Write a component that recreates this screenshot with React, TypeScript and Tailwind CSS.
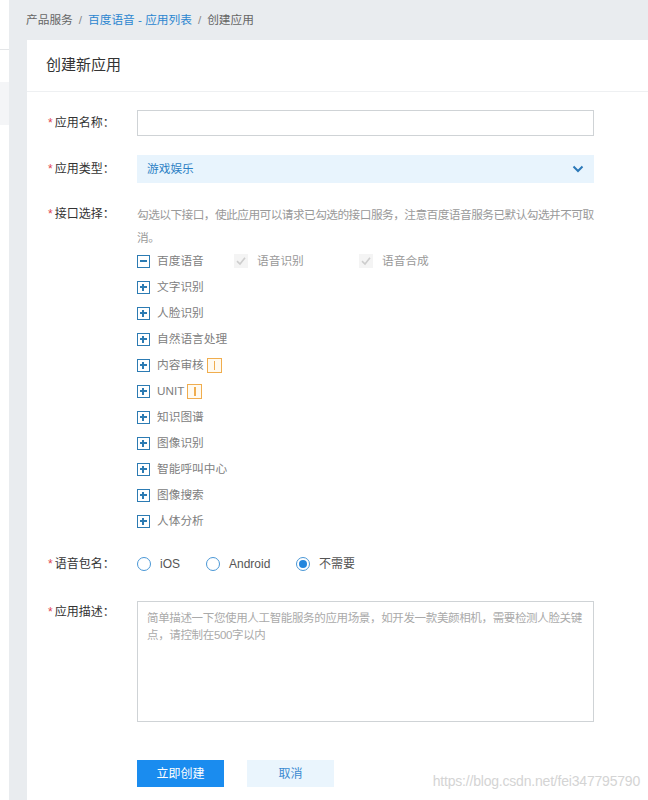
import React from "react";

const font = { fontFamily: '"Liberation Sans", "Noto Sans CJK SC", sans-serif' };

function Label({ text }: { text: string }) {
  return (
    <div className="w-[89px] shrink-0 text-[12px] text-[#333]">
      <span className="text-[#e0454f] mr-[2px]">*</span>
      {text}
    </div>
  );
}

function TreeBox({ minus }: { minus?: boolean }) {
  return (
    <span className="relative inline-block w-[13px] h-[13px] border-[1.5px] border-[#2c7bb3] shrink-0">
      <span className="absolute left-[2px] right-[2px] top-[4px] h-[2px] bg-[#2c7bb3]" />
      {!minus && <span className="absolute top-[2px] bottom-[2px] left-[4px] w-[2px] bg-[#2c7bb3]" />}
    </span>
  );
}

function Badge() {
  return (
    <span className="ml-[3px] inline-flex items-center justify-center w-[15px] h-[15px] border border-[#f0ad4e] bg-[#fffaf0]">
      <span className="w-[1.5px] h-[9px] bg-[#f0ad4e]" />
    </span>
  );
}

function DisabledCheck({ label }: { label: string }) {
  return (
    <span className="flex items-center">
      <svg width="14" height="14" viewBox="0 0 14 14" className="mr-[9px]">
        <rect x="0" y="0" width="14" height="14" fill="#f4f4f4" />
        <path d="M3 7.2 L6 10 L11 3.8" stroke="#cdcdcd" strokeWidth="1.6" fill="none" />
      </svg>
      <span className="text-[#999]">{label}</span>
    </span>
  );
}

function Radio({ label, checked }: { label: string; checked?: boolean }) {
  return (
    <span className="flex items-center">
      <span className="w-[14px] h-[14px] rounded-full border border-[#4a97d6] flex items-center justify-center mr-[9px]">
        {checked && <span className="w-[8px] h-[8px] rounded-full bg-[#2486dd]" />}
      </span>
      <span className="text-[#555]">{label}</span>
    </span>
  );
}

const items: { name: string; badge?: boolean }[] = [
  { name: "文字识别" },
  { name: "人脸识别" },
  { name: "自然语言处理" },
  { name: "内容审核", badge: true },
  { name: "UNIT", badge: true },
  { name: "知识图谱" },
  { name: "图像识别" },
  { name: "智能呼叫中心" },
  { name: "图像搜索" },
  { name: "人体分析" },
];

export default function App() {
  return (
    <div className="relative w-[648px] h-[800px] overflow-hidden flex bg-[#e9ecef]" style={font}>
      {/* left sidebar sliver */}
      <div className="w-[9px] shrink-0 bg-white flex flex-col">
        <div className="h-[49px]" />
        <div className="h-px bg-[#e4e6e8]" />
        <div className="h-[32px]" />
        <div className="h-[43px] bg-[#f4f5f7]" />
      </div>
      <div className="flex-1 flex flex-col pl-[18px]">
        {/* breadcrumb */}
        <div className="h-[40px] flex items-center text-[11.7px] text-[#666] -ml-[1px]">
          <span>产品服务</span>
          <span className="mx-[6px] text-[#888]">/</span>
          <span className="text-[#2b86d0]">百度语音 - 应用列表</span>
          <span className="mx-[6px] text-[#888]">/</span>
          <span>创建应用</span>
        </div>
        {/* card */}
        <div className="flex-1 bg-white flex flex-col">
          <div className="h-[52px] flex items-center pl-[19px] text-[15px] text-[#333] border-b border-[#eef0f2]">
            创建新应用
          </div>
          <div className="pl-[21px] pt-[18px] flex flex-col">
            {/* name */}
            <div className="flex items-center h-[26px]">
              <Label text="应用名称：" />
              <div className="w-[457px] h-[26px] border border-[#cfd3d6]" />
            </div>
            {/* type */}
            <div className="flex items-center h-[28px] mt-[19px]">
              <Label text="应用类型：" />
              <div className="w-[457px] h-[28px] bg-[#e8f4fd] flex items-center justify-between pl-[10px] pr-[10px] text-[11.7px] text-[#2b7fc4]">
                <span>游戏娱乐</span>
                <svg width="12" height="8" viewBox="0 0 12 8">
                  <path d="M1.5 1.5 L6 6 L10.5 1.5" stroke="#2b78b8" strokeWidth="2" fill="none" />
                </svg>
              </div>
            </div>
            {/* interfaces */}
            <div className="flex mt-[20px]">
              <div className="leading-[23px]">
                <Label text="接口选择：" />
              </div>
              <div className="w-[470px] text-[11.7px]">
                <div className="leading-[23px] text-[#999] whitespace-nowrap tracking-[-0.55px]">
                  勾选以下接口，使此应用可以请求已勾选的接口服务，注意百度语音服务已默认勾选并不可取
                  <br />
                  消。
                </div>
                <div className="h-[26px] -mt-[1px] flex items-center text-[#808080]">
                  <TreeBox minus />
                  <span className="ml-[7px] w-[77px]">百度语音</span>
                  <span className="w-[125px]">
                    <DisabledCheck label="语音识别" />
                  </span>
                  <DisabledCheck label="语音合成" />
                </div>
                {items.map((it) => (
                  <div key={it.name} className="h-[26px] flex items-center text-[#808080]">
                    <TreeBox />
                    <span className="ml-[7px]">{it.name}</span>
                    {it.badge && <Badge />}
                  </div>
                ))}
              </div>
            </div>
            {/* voice package */}
            <div className="flex items-center h-[20px] mt-[20px] text-[12px]">
              <Label text="语音包名：" />
              <div className="flex items-center">
                <span className="w-[69px]"><Radio label="iOS" /></span>
                <span className="w-[90px]"><Radio label="Android" /></span>
                <Radio label="不需要" checked />
              </div>
            </div>
            {/* description */}
            <div className="flex mt-[27px]">
              <div className="pt-[2px]">
                <Label text="应用描述：" />
              </div>
              <div className="w-[457px] h-[121px] border border-[#cfd3d6] px-[9px] pt-[8px] text-[11.5px] leading-[17px] text-[#aaa] whitespace-nowrap tracking-[-0.35px]">
                简单描述一下您使用人工智能服务的应用场景，如开发一款美颜相机，需要检测人脸关键
                <br />
                点，请控制在500字以内
              </div>
            </div>
            {/* buttons */}
            <div className="flex mt-[38px] pl-[89px] text-[12px]">
              <div className="w-[87px] h-[27px] bg-[#1a8cef] text-white flex items-center justify-center">
                立即创建
              </div>
              <div className="w-[87px] h-[27px] ml-[23px] bg-[#eaf5fd] text-[#3b8ad0] flex items-center justify-center">
                取消
              </div>
            </div>
          </div>
        </div>
      </div>
      <div className="absolute right-[8px] bottom-[8px] text-[14px] text-[#d4d4d4] tracking-[-0.2px]">
        https://blog.csdn.net/fei347795790
      </div>
    </div>
  );
}
